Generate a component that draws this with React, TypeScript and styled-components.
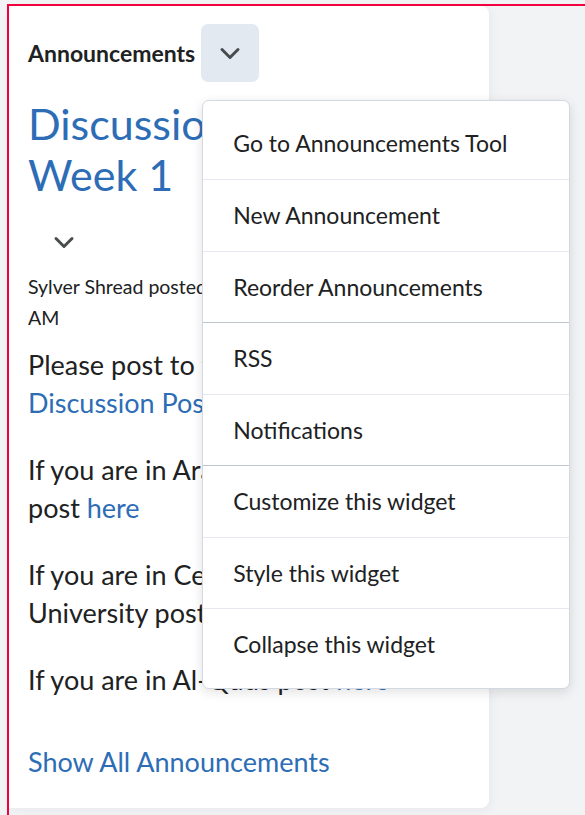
import styled, { createGlobalStyle } from "styled-components";

const GlobalStyle = createGlobalStyle`
  html, body {
    margin: 0;
    padding: 0;
    background: #f2f3f5;
    overflow: hidden;
  }
  body {
    font-family: Lato, "Noto Sans", Arial, sans-serif;
    color: #202122;
  }
`;

interface MenuEntry {
  label: string;
  group?: boolean;
}

const menuItems: MenuEntry[] = [
  { label: "Go to Announcements Tool" },
  { label: "New Announcement" },
  { label: "Reorder Announcements" },
  { label: "RSS", group: true },
  { label: "Notifications" },
  { label: "Customize this widget", group: true },
  { label: "Style this widget" },
  { label: "Collapse this widget" },
];

function Chevron() {
  return (
    <svg width="24" height="24" viewBox="0 0 24 24" aria-hidden="true">
      <path
        d="M4 8.5 12 16.5 20 8.5"
        fill="none"
        stroke="#494c4e"
        strokeWidth="3"
        strokeLinecap="round"
        strokeLinejoin="round"
      />
    </svg>
  );
}

function App() {
  return (
    <>
      <GlobalStyle />
      <Frame>
        <Card>
          <Header>
            <WidgetTitle>Announcements</WidgetTitle>
            <DropdownWrap>
              <MenuButton aria-label="Announcements options">
                <Chevron />
              </MenuButton>
              <Menu role="menu">
                {menuItems.map((item, i) => (
                  <MenuItem key={item.label} $first={i === 0} $group={item.group}>
                    {item.label}
                  </MenuItem>
                ))}
              </Menu>
            </DropdownWrap>
          </Header>

          <PostTitle href="#">Discussion Post for Week 1</PostTitle>
          <ExpandButton aria-label="Expand">
            <Chevron />
          </ExpandButton>
          <Meta>Sylver Shread posted on Monday, Sep 4, 2023 9:00 AM</Meta>

          <PostBody>
            <Body>
              Please post to the appropriate <Link href="#">Discussion Post</Link> for
              your university.
            </Body>
            <Body>
              If you are in Arab American University post <Link href="#">here</Link>
            </Body>
            <Body>
              If you are in Central Palestine University post <Link href="#">here</Link>
            </Body>
            <Body>
              If you are in Al-Quds post <Link href="#">here</Link>
            </Body>
          </PostBody>

          <ShowAll href="#">Show All Announcements</ShowAll>
        </Card>
      </Frame>
    </>
  );
}

const Frame = styled.div`
  margin: 4px 0 0 7px;
  width: 640px;
  height: 900px;
  border-top: 2px solid #f4003f;
  border-left: 2px solid #f4003f;
  box-sizing: border-box;
`;

const Card = styled.section`
  width: 480px;
  box-sizing: border-box;
  padding: 18px 12px 27.5px 19px;
  background: #ffffff;
  border-radius: 0 8px 8px 0;
  box-shadow: 2px 2px 10px rgba(30, 40, 60, 0.05);
`;

const Header = styled.div`
  display: flex;
  align-items: center;
  gap: 6px;
`;

const WidgetTitle = styled.h2`
  margin: 0;
  font-size: 23px;
  font-weight: 700;
  color: #202122;
`;

const DropdownWrap = styled.div`
  position: relative;
`;

const MenuButton = styled.button`
  display: flex;
  align-items: center;
  justify-content: center;
  width: 58px;
  height: 58px;
  padding: 0;
  border: none;
  border-radius: 7px;
  background: #e3e9f1;
  cursor: pointer;
`;

const Menu = styled.div`
  position: absolute;
  top: calc(100% + 18px);
  left: 1px;
  z-index: 2;
  width: 368px;
  box-sizing: border-box;
  padding: 6.5px 0 8px;
  background: #ffffff;
  border: 1px solid #d3d9e3;
  border-radius: 7px;
  box-shadow: 0 3px 12px rgba(0, 0, 0, 0.12);
`;

const MenuItem = styled.div<{ $first?: boolean; $group?: boolean }>`
  display: flex;
  align-items: center;
  height: 71.5px;
  box-sizing: border-box;
  padding: 0 30px;
  border-top: ${(p) =>
    p.$first ? "none" : p.$group ? "1.5px solid #bfc6d0" : "1px solid #e6eaf0"};
  font-size: 23px;
  color: #202122;
  white-space: nowrap;
`;

const PostTitle = styled.a`
  display: block;
  margin-top: 16px;
  font-size: 43px;
  line-height: 51px;
  color: #2d6db6;
  text-decoration: none;
`;

const ExpandButton = styled.button`
  display: flex;
  align-items: center;
  justify-content: center;
  width: 42px;
  height: 42px;
  margin: 21px 0 0 15px;
  padding: 0;
  border: none;
  background: transparent;
`;

const Meta = styled.p`
  margin: 8px 0 0;
  font-size: 19.5px;
  line-height: 31px;
`;

const PostBody = styled.div`
  display: flex;
  flex-direction: column;
  gap: 29px;
  margin-top: 12.5px;
`;

const Body = styled.p`
  margin: 0;
  font-size: 27px;
  line-height: 38px;
`;

const Link = styled.a`
  color: #2d6db6;
  text-decoration: none;
`;

const ShowAll = styled.a`
  display: block;
  margin-top: 44px;
  font-size: 27px;
  line-height: 38px;
  color: #2d6db6;
  text-decoration: none;
`;

export default App;
